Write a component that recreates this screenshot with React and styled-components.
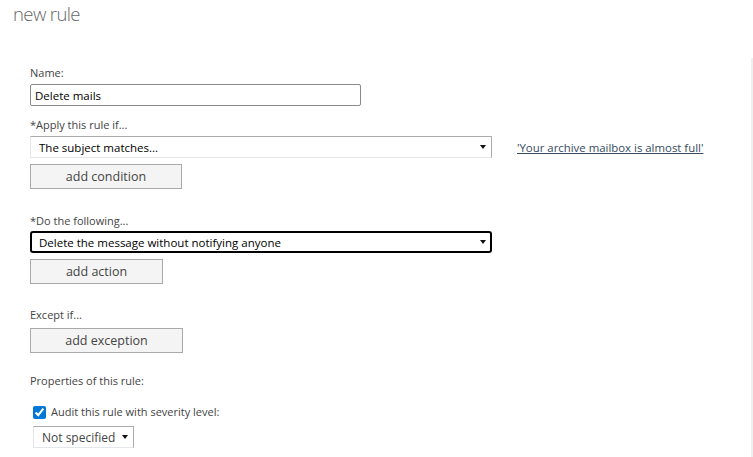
import React from "react";
import styled, { createGlobalStyle } from "styled-components";

const Global = createGlobalStyle`
  html, body { margin: 0; padding: 0; background: #fff; }
  body { font-family: "Open Sans", "Noto Sans", sans-serif; color: #444; }
  * { box-sizing: border-box; }
`;

const Page = styled.div`
  width: 753px;
  height: 457px;
  overflow: hidden;
  display: flex;
  flex-direction: column;
`;

const Header = styled.header`
  height: 58px;
  padding: 0 13px;
`;

const Title = styled.h1`
  margin: 0;
  font-size: 18.5px;
  font-weight: 300;
  letter-spacing: -0.6px;
  line-height: 28px;
  color: #666;
`;

const Body = styled.main`
  flex: 1;
  border-right: 2px solid #f0f0f0;
  padding: 7px 0 0 30px;
  display: flex;
  flex-direction: column;
`;

const Section = styled.section`
  display: flex;
  flex-direction: column;
  align-items: flex-start;
  margin-top: ${(p) => p.$mt || 0}px;
`;

const Label = styled.div`
  font-size: 11px;
  line-height: 16px;
  color: #444;
  margin-bottom: ${(p) => p.$mb ?? 3}px;
`;

const TextInput = styled.input`
  width: 331px;
  height: 22px;
  border: 1px solid #8a8a8a;
  border-radius: 2px;
  padding: 0 4px;
  font-family: inherit;
  font-size: 11.5px;
  color: #000;
  outline: none;
`;

const Row = styled.div`
  display: flex;
  align-items: center;
  gap: 25px;
`;

const SelectBox = styled.div`
  position: relative;
  width: ${(p) => p.$w}px;
  height: 22px;
  display: flex;
  align-items: center;
  padding-left: ${(p) => p.$pl || 8}px;
  font-size: 11.5px;
  color: #000;
  background: #fff;
  border: ${(p) => (p.$focused ? "2px solid #000" : "1px solid")};
  border-color: ${(p) => (p.$focused ? "#000" : "#ababab #ababab #e3e6ea #e3e6ea")};
  border-radius: ${(p) => (p.$focused ? "3px" : "0")};
  ${(p) => p.$focused && "padding-left: 7px;"}
`;

const Arrow = styled.span`
  position: absolute;
  right: ${(p) => p.$r || 5}px;
  top: 50%;
  margin-top: -2px;
  width: 0;
  height: 0;
  border-left: 3.5px solid transparent;
  border-right: 3.5px solid transparent;
  border-top: 4px solid #111;
`;

const Link = styled.a`
  font-size: 11.4px;
  color: #364a5e;
  text-decoration: underline;
  cursor: pointer;
`;

const Button = styled.button`
  width: ${(p) => p.$w}px;
  height: 25px;
  margin-top: ${(p) => p.$mt ?? 6}px;
  background: #f4f4f4;
  border: 1px solid #a9a9a9;
  border-radius: 0;
  font-family: inherit;
  font-size: 12.5px;
  color: #444;
  padding: 0;
`;

const CheckRow = styled.label`
  display: flex;
  align-items: center;
  gap: 5px;
  margin-left: 3px;
  font-size: 11px;
  line-height: 16px;
  color: #444;
`;

const Check = styled.input`
  margin: 0;
  width: 13px;
  height: 13px;
  accent-color: #0078d7;
`;

const Severity = styled(SelectBox)`
  margin-left: 3px;
  margin-top: 6px;
  font-size: 12px;
  color: #444;
`;

export default function App() {
  return (
    <Page>
      <Global />
      <Header>
        <Title>new rule</Title>
      </Header>
      <Body>
        <Section>
          <Label>Name:</Label>
          <TextInput defaultValue="Delete mails" />
        </Section>

        <Section $mt={11}>
          <Label>*Apply this rule if...</Label>
          <Row>
            <SelectBox $w={462}>
              The subject matches...
              <Arrow $r={5} />
            </SelectBox>
            <Link>'Your archive mailbox is almost full'</Link>
          </Row>
          <Button $w={152}>add condition</Button>
        </Section>

        <Section $mt={24}>
          <Label $mb={2}>*Do the following...</Label>
          <SelectBox $w={462} $focused>
            Delete the message without notifying anyone
            <Arrow $r={4} />
          </SelectBox>
          <Button $w={133}>add action</Button>
        </Section>

        <Section $mt={23}>
          <Label $mb={5}>Except if...</Label>
          <Button $w={153} $mt={0}>add exception</Button>
        </Section>

        <Section $mt={20}>
          <Label $mb={15}>Properties of this rule:</Label>
          <CheckRow>
            <Check type="checkbox" defaultChecked />
            Audit this rule with severity level:
          </CheckRow>
          <Severity $w={101}>
            Not specified
            <Arrow $r={5} />
          </Severity>
        </Section>
      </Body>
    </Page>
  );
}
